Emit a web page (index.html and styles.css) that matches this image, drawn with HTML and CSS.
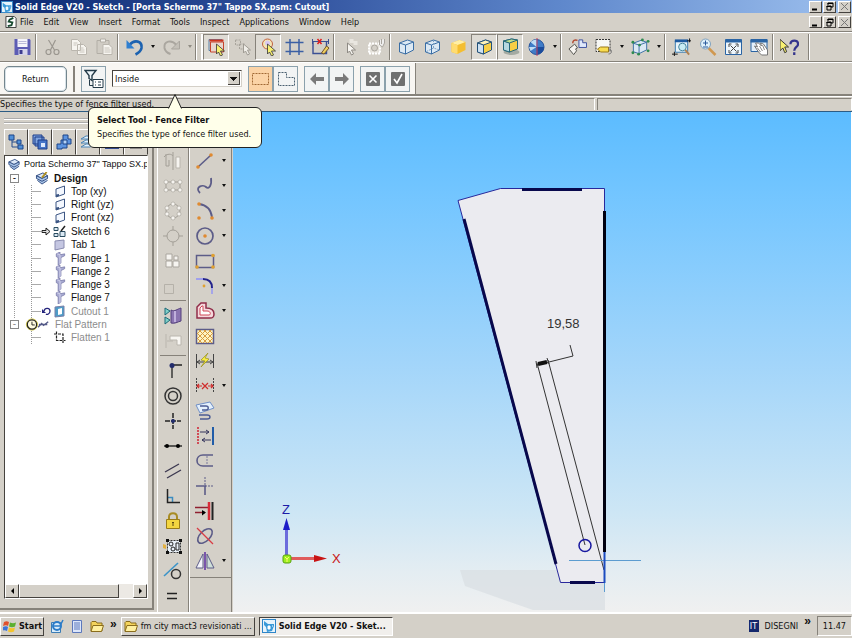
FILE: index.html
```html
<!DOCTYPE html>
<html lang="en">
  <head>
    <meta charset="UTF-8" />
    <meta name="viewport" content="width=device-width, initial-scale=1.0" />
    <link rel="stylesheet" href="styles.css">
    <title>Solid Edge V20</title>
  </head>
  <body>
    <!-- shared icons -->
    <svg class="defs" aria-hidden="true">
      <symbol id="logo" viewBox="0 0 14 14">
        <rect x="0.5" y="0.5" width="13" height="13" fill="#e8f4fc" stroke="#2f86c8" />
        <path d="M2 2l4 3h6v2l-2 5-5 1-1-5-2-2z" fill="#3a9ad9" />
        <path d="M6 7h2v3H6zM10 7h1" fill="#fff" stroke="#fff" />
      </symbol>
      <symbol id="plane" viewBox="0 0 12 12">
        <path d="M2 3.500L10.500 0.500V8.500L2 11.500z" fill="#f4f8ff" stroke="#3c5684" />
        <path d="M2 11.500L5 10.500V8.500L2 9z" fill="#3c5684" />
      </symbol>
      <symbol id="flange" viewBox="0 0 12 14">
        <path d="M2 2l4-2v3l5-1v2L7 6V12l-3 2V6L2 5z" fill="#a9abd2" stroke="#7476a6" stroke-width="0.8" />
        <path d="M3 2l3 1v10" fill="none" stroke="#d4d4ee" />
      </symbol>
      <symbol id="body" viewBox="0 0 14 14">
        <path d="M1 4l7-3 5 3-6 3z" fill="#dce8f8" stroke="#2c4a80" />
        <path d="M1 4v3l6 3 6-3V4L7 7zM2 9l5 4 6-4" fill="#a9c4e8" stroke="#2c4a80" />
      </symbol>
      <symbol id="cube" viewBox="0 0 18 18">
        <path d="M2 5l8-3 6 2v8l-8 4-6-2z" fill="#dce9f4" stroke="#3a6ea5" />
        <path d="M2 5l6 2 8-3M8 7v9" fill="none" stroke="#3a6ea5" />
      </symbol>
      <symbol id="cube-gold" viewBox="0 0 18 18">
        <path d="M2 5l8-3 6 2v8l-8 4-6-2z" fill="#f8cf45" stroke="#24527a" />
        <path d="M2 5l8-3 6 2-8 3z" fill="#fff3b8" stroke="#24527a" />
        <path d="M2 5l6 2v9l-6-2z" fill="#cfe2f2" stroke="#24527a" />
      </symbol>
      <symbol id="folder" viewBox="0 0 14 14">
        <path d="M1 3.500l1-1h4l1 1.500h5v8H1z" fill="#f3d35c" stroke="#8a6d1c" />
        <path d="M3 6.500h10.500l-2 6H1z" fill="#fff0a0" stroke="#8a6d1c" />
      </symbol>
      <symbol id="minimize" viewBox="0 0 9 9"><path d="M1 7.500h5" stroke="#000" stroke-width="2" /></symbol>
      <symbol id="restore" viewBox="0 0 9 9">
        <path d="M3 3V1h5v4H6M2 4h4v4H2z" fill="none" stroke="#000" />
        <path d="M2.500 1.500H8M1.500 4.500H6.500" stroke="#000" />
      </symbol>
      <symbol id="close" viewBox="0 0 9 9"><path d="M1 1l7 7M8 1L1 8" stroke="#777" /></symbol>
    </svg>

    <header class="titlebar">
      <svg class="app-icon"><use href="#logo" /></svg>
      <h1>Solid Edge V20 - Sketch - [Porta Schermo 37" Tappo SX.psm: Cutout]</h1>
      <div class="win-controls">
        <button aria-label="Minimize"><svg><use href="#minimize" /></svg></button>
        <button aria-label="Restore"><svg><use href="#restore" /></svg></button>
        <button class="close" aria-label="Close"><svg><use href="#close" /></svg></button>
      </div>
    </header>

    <nav class="menubar">
      <svg class="doc-icon" viewBox="0 0 13 13">
        <path d="M1 0.500h9l2 2v10H1z" fill="#fff" stroke="#333" />
        <path d="M9 2L5 4l-1 2 4 1-1 3-4 1" fill="none" stroke="#184a30" stroke-width="2" />
      </svg>
      <button>File</button>
      <button>Edit</button>
      <button>View</button>
      <button>Insert</button>
      <button>Format</button>
      <button>Tools</button>
      <button>Inspect</button>
      <button>Applications</button>
      <button>Window</button>
      <button>Help</button>
      <div class="win-controls">
        <button aria-label="Minimize document"><svg><use href="#minimize" /></svg></button>
        <button aria-label="Restore document"><svg><use href="#restore" /></svg></button>
        <button class="close" aria-label="Close document"><svg><use href="#close" /></svg></button>
      </div>
    </nav>

    <div class="toolbar">
      <button class="tool" aria-label="Save"><svg viewBox="0 0 18 18"><path d="M1 1h15l1 1v15H1z" fill="#5c5cb4" /><path d="M4 1h10v8H4z" fill="#f4f4fa" /><path d="M5 3.500h8M5 5.500h8" stroke="#b9b9d8" /><path d="M5 11h9v6H5z" fill="#d5d5ea" /><path d="M6 12h3v4H6z" fill="#3c3c90" /></svg></button>
      <span class="sep"></span>
      <button class="tool" aria-label="Cut"><svg viewBox="0 0 18 18"><g fill="none" stroke="#9b9790" stroke-width="1.200"><path d="M5 2l6 10M12 2L7 12" /><circle cx="5" cy="14" r="2.500" /><circle cx="13" cy="14" r="2.500" /></g></svg></button>
      <button class="tool" aria-label="Copy"><svg viewBox="0 0 18 18"><path d="M2 1.500h6l3 3v8H2zM8 6.500h6l3 3v7H8z" fill="#f7f5f0" stroke="#bab6ae" /><path d="M4 5h4M4 7h3M10 10h4M10 12h5M10 14h5" stroke="#c8c4bc" /></svg></button>
      <button class="tool" aria-label="Paste"><svg viewBox="0 0 18 18"><path d="M1.500 2.500h12v13h-12z" fill="#d0ccc4" stroke="#b2aea6" /><path d="M5 1h5v3H5z" fill="#f4f2ee" stroke="#b2aea6" /><path d="M7.500 6.500h6l3 3v7h-9z" fill="#f7f5f0" stroke="#bab6ae" /><path d="M9 10h5M9 12h6M9 14h6" stroke="#c8c4bc" /></svg></button>
      <span class="sep"></span>
      <button class="tool" aria-label="Undo"><svg viewBox="0 0 18 18"><path d="M4 7c5-6 13-4 12 3-.5 3-3 5-6 6.500" fill="none" stroke="#1c62b0" stroke-width="2.600" /><path d="M1 2v8.500h8z" fill="#2f7fd0" /></svg></button>
      <button class="caret" aria-label="Undo list"></button>
      <button class="tool" aria-label="Redo"><svg viewBox="0 0 18 18"><path d="M14 7C9 1 1 3 2 10c.5 3 3 5 6 6" fill="none" stroke="#aaa69f" stroke-width="2" /><path d="M17 3v8H9z" fill="#c4c0b8" stroke="#aaa69f" /></svg></button>
      <button class="caret dim" aria-label="Redo list"></button>
      <span class="sep wide"></span>
      <button class="tool on" aria-label="Select tool"><svg viewBox="0 0 18 18"><path d="M1.500 1.500h13v11h-13z" fill="none" stroke="#5a80a8" /><path d="M3 4h13v10H3z" fill="#e8d6ce" stroke="#c8442c" /><path d="M2 2.500h14" stroke="#d0341c" stroke-width="2" /><path d="M9 6v10l2-2 2 4 2-1-2-4h4z" fill="#f8f070" stroke="#333" stroke-width=".8" /></svg></button>
      <button class="tool" aria-label="Quick pick"><svg viewBox="0 0 18 18"><path d="M2 2h5v5H2zM6 6h5v5H6z" fill="none" stroke="#a8a49c" stroke-dasharray="2 1" /><path d="M10 6v9l2-2 2 4 2-1-2-4h3z" fill="#f0eee8" stroke="#a09c94" /></svg></button>
      <button class="tool on" aria-label="Sketch pick"><svg viewBox="0 0 18 18"><circle cx="8" cy="6" r="5" fill="#f3e6b4" stroke="#c06040" /><circle cx="8" cy="5" r="2.500" fill="#d8c8f0" /><path d="M8 6v10l2-2 2 4 2-1-2-4h4z" fill="#f8f070" stroke="#333" stroke-width=".8" /></svg></button>
      <button class="tool" aria-label="Grid"><svg viewBox="0 0 18 18"><path d="M0 4.500h18M0 13.500h18M4.500 1v16M13.500 1v16" stroke="#3b5fa4" stroke-width="1.500" /></svg></button>
      <button class="tool" aria-label="Relationship assistant"><svg viewBox="0 0 18 18"><path d="M1.500 3v12.500H15V3" fill="none" stroke="#3b4f94" stroke-width="1.400" /><path d="M1 3.500h16M1 1v5M17 1v5" stroke="#3b4f94" /><path d="M6 1l4 5M10 1L6 6" stroke="#e02020" stroke-width="1.500" /><path d="M10 15l5-7 2.500 2-5 6z" fill="#f0d060" stroke="#74562a" /></svg></button>
      <span class="sep"></span>
      <button class="tool" aria-label="Select from list"><svg viewBox="0 0 18 18"><path d="M8 1h4v4H8zM12 3h4v4h-4z" fill="#e9e6e0" /><path d="M6 5v10l2-2 2 4 2-1-2-4h4z" fill="#f8f6f2" stroke="#8e8a84" /></svg></button>
      <button class="tool" aria-label="Occurrence"><svg viewBox="0 0 18 18"><path d="M1.500 5.500h11v10h-11z" fill="#e6e3dc" stroke="#fff" stroke-width="2" stroke-dasharray="2 1" /><circle cx="7" cy="10" r="3" fill="#d4d0c8" stroke="#aaa69f" /><path d="M12 2v5l3 2 2-4V1M14 1v5" fill="#eee" stroke="#aaa69f" /></svg></button>
      <span class="sep"></span>
      <button class="tool" aria-label="Wireframe"><svg><use href="#cube" /></svg></button>
      <button class="tool" aria-label="Hidden edges"><svg viewBox="0 0 18 18"><use href="#cube" /><path d="M10 2v8l6 2M10 10l-8 4" fill="none" stroke="#7fa3c6" stroke-dasharray="2 1" /></svg></button>
      <button class="tool" aria-label="Shaded"><svg viewBox="0 0 18 18"><path d="M2 5l8-3 6 2v8l-8 4-6-2z" fill="#f4be30" /><path d="M2 5l8-3 6 2-8 3z" fill="#ffefa6" /><path d="M2 5l6 2v9l-6-2z" fill="#ffdc70" /></svg></button>
      <button class="tool on" aria-label="Shaded with edges"><svg><use href="#cube-gold" /></svg></button>
      <button class="tool on" aria-label="Drop shadow"><svg viewBox="0 0 18 18"><ellipse cx="10" cy="14" rx="8" ry="3" fill="#a4aaa2" /><path d="M2 3l8-2 6 1v9l-8 3-6-2z" fill="#f8cf45" stroke="#24667a" /><path d="M2 3l6 2v9l-6-2z" fill="#b6d8e0" stroke="#24667a" /><path d="M2 3l8-2 6 1-8 3z" fill="#bfe08c" stroke="#24667a" /></svg></button>
      <button class="tool" aria-label="Sharpen"><svg viewBox="0 0 18 18"><circle cx="9" cy="9" r="7.500" fill="#3f7cc8" stroke="#24529a" /><path d="M9 9L3 4a8 8 0 0 1 6-2.500zM9 9H1.500l1.500 4z" fill="#c0dcf4" /><path d="M9 9h7.500a7.500 7.500 0 0 1-7.500 7.500z" fill="#1c4c9c" /><path d="M9.500 0v18" stroke="#c04060" /></svg></button>
      <button class="caret" aria-label="Sharpen list"></button>
      <span class="sep"></span>
      <button class="tool" aria-label="Named views"><svg viewBox="0 0 20 18"><path d="M1 11l6-5 3 4-2 1 1 2-3 4z" fill="#f6f4f0" stroke="#50504c" /><path d="M11.500 1.500h4v3h4v5h-8z" fill="#dfe8fa" stroke="#3c50a0" /><path d="M5 5c0-3 2-4 5-3" fill="none" stroke="#b04830" stroke-width="1.500" /></svg></button>
      <button class="tool" aria-label="Tag"><svg viewBox="0 0 18 18"><path d="M1.500 1.500h14v12h-14z" fill="#f7f7f4" stroke="#333" stroke-dasharray="2 1" /><path d="M3 11l3-2h8v5H6z" fill="#f8dc50" stroke="#9a7818" /><path d="M14 11c4 0 4 5 0 5" fill="none" stroke="#777" /></svg></button>
      <button class="caret" aria-label="Tag list"></button>
      <button class="tool" aria-label="Common views"><svg viewBox="0 0 20 18"><use href="#cube" width="19" height="18" /><g fill="#2d8a50"><circle cx="2" cy="4" r="1.500" /><circle cx="2" cy="15" r="1.500" /><circle cx="8" cy="16.500" r="1.500" /><circle cx="9" cy="7" r="1.500" /><circle cx="12" cy="1.500" r="1.500" /><circle cx="18" cy="3" r="1.500" /><circle cx="18" cy="13" r="1.500" /></g></svg></button>
      <button class="caret" aria-label="Common views list"></button>
      <span class="sep"></span>
      <button class="tool" aria-label="Zoom area"><svg viewBox="0 0 20 18"><path d="M3.500 2.500h13v12h-13z" fill="#e8f4fa" stroke="#3578b0" /><path d="M3 2.500h14" stroke="#1d5aa0" stroke-width="3" /><circle cx="11" cy="9" r="4" fill="#c8ecf4" stroke="#3f7f98" /><path d="M14 12l4 5" stroke="#b08050" stroke-width="2" /><path d="M0 16.500h6M2.500 14v5M16 2.500h4M18.500 0v4" stroke="#111" /></svg></button>
      <button class="tool" aria-label="Zoom"><svg viewBox="0 0 18 18"><path d="M10 10l7 7" stroke="#d09850" stroke-width="2.500" /><circle cx="7" cy="6" r="5" fill="#dff1fb" stroke="#7fa2c0" /><path d="M4.500 5h5M7 2.500v5M4.500 9h5" stroke="#2a5a9c" /></svg></button>
      <button class="tool" aria-label="Fit"><svg viewBox="0 0 18 18"><path d="M1 1.500h16v15H1z" fill="#eef6fc" stroke="#2a64a4" /><path d="M1 3h16" stroke="#2a64a4" stroke-width="3" /><path d="M6 7.500l6 6M12 7.500l-6 6" stroke="#444" /><path d="M4.500 9V6H7M11 6h2.500v3M4.500 12v3H7M11 15h2.500v-3" fill="none" stroke="#444" /></svg></button>
      <button class="tool" aria-label="Pan"><svg viewBox="0 0 18 18"><path d="M.5 1.500h16v12H.5z" fill="#e4f0fa" stroke="#2a64a4" /><path d="M0 3h17" stroke="#2a64a4" stroke-width="3" /><path d="M4 8l3 1-2-4 3 0 3 3-1-3 3 1 4 6v5h-6l-3-3z" fill="#fff" stroke="#777" /><path d="M7 10l3 4M9 8l3 5M12 7l2 5" stroke="#888" /></svg></button>
      <span class="sep"></span>
      <button class="tool" aria-label="Help"><svg viewBox="0 0 20 18"><path d="M0 1v12l3-3 2 5 2-1-2-5h4z" fill="#f8f070" stroke="#333" /><path d="M11 6c0-5 8-5 8 0 0 3-4 3-4 7M15 14.500v3" fill="none" stroke="#34348c" stroke-width="2.400" /></svg></button>
      <span class="sep end"></span>
    </div>

    <div class="ribbon">
      <div class="ribbon-bar">
        <button class="return">Return</button>
        <span class="rule"></span>
        <button class="rb" aria-label="Filter"><svg viewBox="0 0 20 20"><path d="M1 1.500h11L8 6.500v5l-3-2v-3z" fill="#eef6fa" stroke="#233a48" stroke-width="1.400" /><path d="M5.500 11v5.500H9" fill="none" stroke="#233a48" /><path d="M9 10.500h10v8H9z" fill="#fff" stroke="#233a48" /><path d="M11 13h1M14 13h3M11 16h1M14 16h3" stroke="#233a48" /></svg></button>
        <select class="fence" id="fence" aria-label="Fence filter">
          <option>Inside</option>
        </select>
        <div class="rb-pair">
          <button class="rb hot" aria-label="Rectangle fence"><svg viewBox="0 0 20 20"><path d="M1.500 4.500h16v11h-16z" fill="none" stroke="#a06834" stroke-dasharray="2 1" /></svg></button>
          <button class="rb" aria-label="Polygon fence"><svg viewBox="0 0 20 20"><path d="M2.500 3.500h8v5h8v8h-16z" fill="none" stroke="#4a6070" stroke-dasharray="2 1" /></svg></button>
        </div>
        <div class="rb-pair">
          <button class="rb" aria-label="Previous"><svg viewBox="0 0 20 20"><path d="M3 10l6-6v4h8v4H9v4z" fill="#7a7a7a" /></svg></button>
          <button class="rb" aria-label="Next"><svg viewBox="0 0 20 20"><path d="M17 10l-6-6v4H3v4h8v4z" fill="#7a7a7a" /></svg></button>
        </div>
        <div class="rb-pair">
          <button class="rb" aria-label="Cancel"><svg viewBox="0 0 20 20"><rect x="3" y="3" width="14" height="14" rx="1" fill="#6f7070" /><path d="M6.500 6.500l7 7M13.500 6.500l-7 7" stroke="#fff" stroke-width="1.600" /></svg></button>
          <button class="rb" aria-label="Accept"><svg viewBox="0 0 20 20"><rect x="3" y="3" width="14" height="14" rx="1" fill="#6f7070" /><path d="M6 10l3 4 5-9" fill="none" stroke="#fff" stroke-width="1.600" /></svg></button>
        </div>
      </div>
      <div class="tooltip" role="tooltip">
        <svg class="tip" viewBox="0 0 14 15"><path d="M0.500 14.500L7 0.500L13.500 14.500" fill="#ffffea" stroke="#222" /></svg>
        <strong>Select Tool - Fence Filter</strong>
        <p>Specifies the type of fence filter used.</p>
      </div>
    </div>

    <div class="prompt">
      <p>Specifies the type of fence filter used.</p>
      <p></p>
    </div>

    <main class="work">
      <aside class="edgebar">
        <div class="grip"></div>
        <div class="tabs">
          <button class="active" aria-label="Feature PathFinder"><svg viewBox="0 0 16 16"><path d="M4 5v8h6M4 8h6" fill="none" stroke="#244c8c" /><path d="M1 1h5v5H1zM9 6h4v4H9zM10 11h5v4h-5z" fill="#5090d8" stroke="#1c4488" /></svg></button>
          <button aria-label="Feature library"><svg viewBox="0 0 16 16"><path d="M1 1h9v9H1zM3 3h9v9H3z" fill="#7fa4e0" stroke="#1c3c88" /><path d="M6 6h9v9H6z" fill="#4474c8" stroke="#1c3c88" /><path d="M9 9h4v4H9z" fill="#dce8fc" /></svg></button>
          <button aria-label="Family of parts"><svg viewBox="0 0 16 16"><path d="M7 1h5v4h3v5h-4v4H6v1H1v-5h4V6h2z" fill="#5c94e0" stroke="#1c4488" /><path d="M7 6h4v4H7z" fill="#b4d4f8" stroke="#1c4488" /></svg></button>
          <button aria-label="Layers"><svg viewBox="0 0 16 16"><path d="M1 5l5-3h9l-5 3zM1 9l5-3h9l-5 3zM1 13l5-3h9l-5 3z" fill="#e4f2fc" stroke="#4c84b4" /></svg></button>
          <button aria-label="Sensors"><svg viewBox="0 0 16 16"><path d="M1 1h14v14H1z" fill="#344c90" /></svg></button>
          <button aria-label="Playback"><svg viewBox="0 0 16 16"><path d="M2 2h12v12H2z" fill="#ddd" stroke="#444" /></svg></button>
        </div>
        <div class="tree-box">
          <ul class="tree">
            <li class="root group"><svg><use href="#body" /></svg>Porta Schermo 37" Tappo SX.p</li>
            <li class="branch">
              <span class="box">-</span>
              <svg viewBox="0 0 14 14"><use href="#body" /><path d="M7 6l5-6" stroke="#b09020" stroke-width="2" /></svg>
              <b>Design</b>
            </li>
            <li>
              <ul class="leaves">
                <li><svg><use href="#plane" /></svg>Top (xy)</li>
                <li><svg><use href="#plane" /></svg>Right (yz)</li>
                <li class="group"><svg><use href="#plane" /></svg>Front (xz)</li>
                <li class="current">
                  <svg class="wide" viewBox="0 0 26 13"><path d="M1 5.500h4V3l4 3.500L5 10V7.500H1z" fill="#ddd" stroke="#222" /><path d="M13 2.500h4v3h-4zM13 8.500h4v3h-4zM19 6.500h5v5h-5z" fill="#dbe9f4" stroke="#2a4c60" /><path d="M20 6l4-5" stroke="#222" stroke-width="1.500" /></svg>Sketch 6
                </li>
                <li class="group"><svg viewBox="0 0 12 12"><path d="M1 2.500l9-1v8l-9 2z" fill="#c5c7e2" stroke="#8a8cb0" /></svg>Tab 1</li>
                <li><svg><use href="#flange" /></svg>Flange 1</li>
                <li><svg><use href="#flange" /></svg>Flange 2</li>
                <li><svg><use href="#flange" /></svg>Flange 3</li>
                <li class="group"><svg><use href="#flange" /></svg>Flange 7</li>
                <li class="current dim last">
                  <svg class="wide" viewBox="0 0 26 13"><path d="M3 6c1-4 6-3 6 0s-3 4-4 3" fill="none" stroke="#24247c" stroke-width="1.300" /><path d="M1 4v4h4z" fill="#24247c" /><path d="M14 2l9-1v10l-9 1z" fill="#4e9cc8" stroke="#7880a8" /><path d="M17 4l4-1v6l-4 1z" fill="#fff" /></svg>Cutout 1
                </li>
              </ul>
            </li>
            <li class="branch flat dim">
              <span class="box">-</span>
              <svg viewBox="0 0 26 14"><circle cx="6.500" cy="7" r="6" fill="#fffce0" stroke="#c8bc30" /><circle cx="6.500" cy="7" r="5" fill="none" stroke="#222" stroke-width="1.300" /><path d="M6.500 4V7.500h3" fill="none" stroke="#222" /><path d="M13 10l4-4 2 2 5-4M14 7h9" fill="none" stroke="#555a88" stroke-width="1.500" /></svg>
              Flat Pattern
            </li>
            <li>
              <ul class="leaves">
                <li class="dim last"><svg viewBox="0 0 12 12"><path d="M0 2.500h9v9M2.500 0v9h9" fill="none" stroke="#222" stroke-width="1.200" stroke-dasharray="3 1" /></svg>Flatten 1</li>
              </ul>
            </li>
          </ul>
          <div class="hscroll">
            <button aria-label="Scroll left"><svg viewBox="0 0 5 8"><path d="M4 1v6L1 4z" /></svg></button>
            <div class="track"><div class="thumb"></div></div>
            <button aria-label="Scroll right"><svg viewBox="0 0 5 8"><path d="M1 1v6l3-3z" /></svg></button>
          </div>
        </div>
      </aside>

      <div class="palette">
        <button class="pt" aria-label="Mirror"><svg viewBox="0 0 20 20"><path d="M10 1v18M1 6c3-4 8-3 9-1M3 3v12h3V9" fill="none" stroke="#a39f97" /><path d="M13 6h4v11h-4z" fill="#f6f4f0" stroke="#bab6ae" /></svg></button>
        <button class="pt" aria-label="Rectangular pattern"><svg viewBox="0 0 20 20"><path d="M3 6h14v8H3z" fill="none" stroke="#a39f97" /><g fill="#f6f4f0" stroke="#a39f97" stroke-width=".6"><circle cx="3" cy="6" r="2" /><circle cx="10" cy="6" r="2" /><circle cx="17" cy="6" r="2" /><circle cx="3" cy="14" r="2" /><circle cx="10" cy="14" r="2" /><circle cx="17" cy="14" r="2" /></g></svg></button>
        <button class="pt" aria-label="Circular pattern"><svg viewBox="0 0 20 20"><circle cx="10" cy="10" r="7" fill="none" stroke="#a39f97" /><g fill="#f6f4f0" stroke="#a39f97" stroke-width=".6"><circle cx="10" cy="3" r="2" /><circle cx="16" cy="7" r="2" /><circle cx="16" cy="13" r="2" /><circle cx="10" cy="17" r="2" /><circle cx="4" cy="13" r="2" /><circle cx="4" cy="7" r="2" /></g></svg></button>
        <button class="pt" aria-label="Point"><svg viewBox="0 0 20 20"><circle cx="10" cy="10" r="6" fill="none" stroke="#a39f97" /><path d="M10 0v4M10 16v4M0 10h4M16 10h4" stroke="#a39f97" /></svg></button>
        <button class="pt" aria-label="Tiles"><svg viewBox="0 0 20 20"><path d="M3 3h6v6H3zM3 10h6v6H3zM10 10h6v6h-6zM11 5h4v4h-4z" fill="#f6f4f0" stroke="#aaa69f" /></svg></button>
        <button class="pt" aria-label="Scale"><svg viewBox="0 0 20 20"><path d="M1.500 8.500h9v9h-9z" fill="none" stroke="#b5b1a9" /></svg></button>
        <span class="hsep"></span>
        <button class="pt" aria-label="Project"><svg viewBox="0 0 20 20"><path d="M2 2l5 3-5 4zM2 11l5 3-5 4z" fill="#7fd0c8" stroke="#1e6a78" /><path d="M8 4c4 2 6-1 10-2v13c-4 1-6 3-10 2z" fill="#8a74b0" stroke="#54407c" /><path d="M12 5v11" stroke="#c0b0dc" stroke-width="2" /></svg></button>
        <button class="pt" aria-label="Include"><svg viewBox="0 0 20 20"><path d="M3 3v14M4 10h6" stroke="#bab6ae" /><path d="M7 5h11v9h-4V9H7z" fill="#f8f6f2" stroke="#bab6ae" /></svg></button>
        <span class="hsep"></span>
        <button class="pt" aria-label="Connect"><svg viewBox="0 0 20 20"><path d="M9 17V4h10" fill="none" stroke="#222" stroke-width="1.300" /><circle cx="9" cy="4.500" r="2.500" fill="#222c6c" /></svg></button>
        <button class="pt" aria-label="Concentric"><svg viewBox="0 0 20 20"><circle cx="10" cy="10" r="8" fill="none" stroke="#333" stroke-width="1.500" /><circle cx="10" cy="10" r="4.500" fill="none" stroke="#333" stroke-width="1.500" /></svg></button>
        <button class="pt" aria-label="Horizontal/vertical"><svg viewBox="0 0 20 20"><path d="M10 2v16M2 10h16" stroke="#222" stroke-width="1.500" stroke-dasharray="5 1" /><circle cx="10" cy="10" r="2" fill="#222c6c" /></svg></button>
        <button class="pt" aria-label="Collinear"><svg viewBox="0 0 20 20"><path d="M1 10h18" stroke="#222" stroke-width="1.400" /><circle cx="4" cy="10" r="2" /><circle cx="15" cy="10" r="2" /></svg></button>
        <button class="pt" aria-label="Parallel"><svg viewBox="0 0 20 20"><path d="M2 11l14-8M4 17l14-8" stroke="#3c3850" stroke-width="1.400" /></svg></button>
        <button class="pt" aria-label="Perpendicular"><svg viewBox="0 0 20 20"><path d="M4.500 11.500h5v5" fill="none" stroke="#3c8cc0" stroke-width="1.500" /><path d="M4.500 3v13.500H17" fill="none" stroke="#222" stroke-width="1.500" /></svg></button>
        <button class="pt" aria-label="Lock"><svg viewBox="0 0 20 20"><path d="M6 9V6c0-5 8-5 8 0v3" fill="none" stroke="#a88c24" stroke-width="2" /><path d="M3.500 8.500h13v9h-13z" fill="#f4d640" stroke="#9a7c18" /><path d="M10 11v4M9 11.500h2" stroke="#5c4a10" /></svg></button>
        <button class="pt" aria-label="Rigid set"><svg viewBox="0 0 20 20"><path d="M4.500 4.500h13v12h-13z" fill="#e8f0f8" stroke="#333" stroke-dasharray="2 1" /><path d="M3 3h3v3H3zM16 3h3v3h-3zM3 15h3v3H3zM16 15h3v3h-3z" fill="#111" /><circle cx="8" cy="8" r="2" fill="none" stroke="#222" /><circle cx="10" cy="13" r="2" fill="none" stroke="#222" /><path d="M13 7h3v7h-3z" fill="none" stroke="#222" /><path d="M0 8l3 1v4l-3-1z" fill="#e2b040" /></svg></button>
        <button class="pt" aria-label="Tangent"><svg viewBox="0 0 20 20"><path d="M1 15L15 2" stroke="#3c94c8" stroke-width="1.600" /><circle cx="13" cy="13" r="4.500" fill="none" stroke="#333" stroke-width="1.500" /></svg></button>
        <button class="pt" aria-label="Equal"><svg viewBox="0 0 20 20"><path d="M4 7.500h10M4 12.500h10" stroke="#222" stroke-width="1.600" /></svg></button>
      </div>

      <div class="palette draw">
        <div class="draw-list">
          <button class="pt more" aria-label="Line"><svg viewBox="0 0 20 20"><path d="M3 16L16 4" stroke="#5c5c88" stroke-width="1.600" /><circle cx="3" cy="16" r="1.800" fill="#e08a30" /><circle cx="16" cy="4" r="1.800" fill="#e08a30" /></svg></button>
          <button class="pt more" aria-label="Curve"><svg viewBox="0 0 20 20"><path d="M5 17c-6-6 3-9 6-6s6-2 5-9" fill="none" stroke="#5c5c88" stroke-width="1.800" /></svg></button>
          <button class="pt more" aria-label="Arc"><svg viewBox="0 0 20 20"><path d="M4 3c8 1 12 6 13 13" fill="none" stroke="#5c5c88" stroke-width="1.800" /><circle cx="4" cy="3" r="1.800" fill="#e08a30" /><circle cx="17" cy="17" r="1.800" fill="#e08a30" /><circle cx="4" cy="17" r="1.800" fill="#e08a30" /></svg></button>
          <button class="pt more" aria-label="Circle"><svg viewBox="0 0 20 20"><circle cx="10" cy="10" r="8" fill="none" stroke="#5c5c88" stroke-width="1.700" /><circle cx="10" cy="10" r="1.800" fill="#e08a30" /></svg></button>
          <button class="pt" aria-label="Rectangle"><svg viewBox="0 0 20 20"><path d="M1.500 4.500h17v12h-17z" fill="none" stroke="#5c5c88" stroke-width="1.500" /><circle cx="18" cy="4.500" r="1.800" fill="#e0a030" /><circle cx="18" cy="16" r="1.800" fill="#e0a030" /><circle cx="2" cy="16" r="1.800" fill="#e0a030" /></svg></button>
          <button class="pt more" aria-label="Fillet"><svg viewBox="0 0 20 20"><path d="M1 3h7M17 12v6" stroke="#a0a0ec" stroke-width="1.800" /><path d="M8 3c6 0 9 3 9 9" fill="none" stroke="#24248c" stroke-width="2" /><circle cx="9" cy="10" r="1.400" fill="#e0a030" /></svg></button>
          <button class="pt more" aria-label="Offset"><svg viewBox="0 0 20 20"><path d="M2 17V6l4-4h5v5c5 0 8 2 8 6s-2 4-4 4z" fill="#f4d8dc" stroke="#902c48" stroke-width="1.500" /><path d="M5 14V7l2-2h1v5h4c4 0 4 4 2 4z" fill="#fff" stroke="#d04858" /></svg></button>
          <button class="pt" aria-label="Fill"><svg viewBox="0 0 20 20"><path d="M1.500 3.500h17v14h-17z" fill="#fdf4c4" stroke="#5c5c88" stroke-width="1.500" /><path d="M2 8l4-4M2 13l9-9M3 17L16 4M8 17L18 7M13 17l5-5M2 12l5 5M2 7l10 10M4 4l13 13M9 4l9 9M14 4l4 4" stroke="#d89c40" /></svg></button>
          <button class="pt" aria-label="Smart dimension"><svg viewBox="0 0 20 20"><path d="M1.500 3v14M18.500 3v14M1 11h18M5 9l-3 2 3 2M15 9l3 2-3 2" fill="none" stroke="#444" /><path d="M13 2L6 9l4 1-4 6 8-8-4-1z" fill="#f8ec40" stroke="#98901c" stroke-width=".7" /></svg></button>
          <button class="pt more" aria-label="Distance between"><svg viewBox="0 0 20 20"><path d="M1.500 2v15M18.500 2v15" stroke="#444" stroke-dasharray="2 1" /><path d="M2 10h5M13 10h5M4 8l-2 2 2 2M16 8l2 2-2 2M7 7l6 6M13 7l-6 6" fill="none" stroke="#d02c2c" stroke-width="1.200" /></svg></button>
          <button class="pt" aria-label="Copy sketch"><svg viewBox="0 0 20 20"><path d="M1 4l14-3 4 6-14 5z" fill="#e4f0fc" stroke="#7090c8" /><path d="M5 5h6c3 0 3 4 0 4H7M4 14h8c4 0 4 4 0 4H5" fill="none" stroke="#4c5c94" stroke-width="1.400" /></svg></button>
          <button class="pt" aria-label="Move to"><svg viewBox="0 0 20 20"><path d="M3 1v18" stroke="#d02c3c" stroke-width="1.600" stroke-dasharray="2 1" /><path d="M18 1v18" stroke="#205ca8" stroke-width="2" /><path d="M5 6h9M11 4l3 2-3 2M16 14H7M10 12l-3 2 3 2" fill="none" stroke="#34345c" /></svg></button>
          <button class="pt" aria-label="Trim"><svg viewBox="0 0 20 20"><path d="M18 4H8c-8 0-8 11 0 11h10" fill="none" stroke="#5c5c88" stroke-width="1.600" /><path d="M12 5v10" stroke="#7a7a9c" stroke-dasharray="2 1" /></svg></button>
          <button class="pt" aria-label="Extend"><svg viewBox="0 0 20 20"><path d="M1 10h10M10 10v9" stroke="#5c5c88" stroke-width="1.600" /><path d="M10 1v9h9" fill="none" stroke="#5c5c88" stroke-dasharray="2 1" /></svg></button>
          <button class="pt" aria-label="Snap to edge"><svg viewBox="0 0 20 20"><path d="M0 6.500h13M0 11.500h10" stroke="#902030" stroke-width="1.500" /><path d="M7 9l4 2.500-4 3z" /><path d="M14 1v18" stroke="#d82c38" stroke-width="2.500" /><path d="M17.500 1v18" stroke="#222" stroke-width="2" /></svg></button>
          <button class="pt" aria-label="Symmetric"><svg viewBox="0 0 20 20"><ellipse cx="10" cy="10" rx="9" ry="5" transform="rotate(-45 10 10)" fill="none" stroke="#5c5c88" stroke-width="1.600" /><path d="M2 2l16 16" stroke="#d83c44" stroke-width="1.300" /></svg></button>
          <button class="pt more" aria-label="Mirror lines"><svg viewBox="0 0 20 20"><path d="M8 3v14H1z" fill="#f4f4fa" stroke="#5c5c88" /><path d="M12 3v14h7z" fill="#cfe0d8" stroke="#5c5c88" /><path d="M10 1v18" stroke="#7048a8" stroke-width="1.800" /></svg></button>
        </div>
      </div>

      <section class="view" aria-label="Model view">
        <svg class="model">
          <path d="M227 458h145v40h-72l-68-24z" fill="#dadfe3" opacity=".75" />
          <path d="M225 88.500L267.500 76.500H371.500V470.500H327.500z" fill="#ebebf0" stroke="#28289c" />
          <path d="M231 107L323 452" stroke="#08084c" stroke-width="3" />
          <path d="M289 77.500h60M337 470.500h25" stroke="#08084c" stroke-width="3" />
          <path d="M371.500 99V440" stroke="#000010" stroke-width="3" />
          <path d="M304 251L352 433M315 248L371 458M304 253l36-9-3-11M303 249l1 7M314 246l2 6" fill="none" stroke="#333" />
          <path d="M305 252l9-2" stroke="#111" stroke-width="4" />
          <circle cx="352" cy="433.500" r="6" fill="none" stroke="#1818a0" stroke-width="1.500" />
          <path d="M336 448.500h72M371.500 440v40" stroke="#5c9cd0" />
          <path d="M371.500 440v31" stroke="#1c4cc0" stroke-width="2" />
          <text class="dim-text" x="314" y="216">19,58</text>

          <path d="M53.500 445V415" stroke="#6c6cdc" stroke-width="3" />
          <path d="M50 418h7l-3.500-12z" fill="#1c1cc8" />
          <path d="M55 446.500h28" stroke="#e05c5c" stroke-width="3" />
          <path d="M81 443v7l13-3.500z" fill="#c81414" />
          <rect x="50" y="443" width="8" height="8" rx="2" fill="#9cf020" stroke="#58a010" />
          <path d="M52 445l2 2 2-2M54 447v3" fill="none" stroke="#fffb70" />
          <text class="axis z" x="49" y="402">Z</text>
          <text class="axis x" x="99" y="451">X</text>
        </svg>
      </section>
    </main>

    <footer class="taskbar">
      <button class="start"><svg viewBox="0 0 14 14"><path d="M1 3c2-1 3-1 5 0L5 7C4 6 2 6 0 7z" fill="#e0502c" /><path d="M7 3.500c2 1 4 1 6 0l-1 4c-2 1-4 1-6 0z" fill="#5cb030" /><path d="M0 8c2-1 4-1 5 0l-1 4c-2-1-3-1-5 0z" fill="#3c74d8" /><path d="M6 8.500c2 1 4 1 6 0l-1 4c-2 1-4 1-6 0z" fill="#f4c42c" /></svg>Start</button>
      <div class="quick">
        <button aria-label="Internet Explorer"><svg viewBox="0 0 14 14"><path d="M1.500 3.500h9v10h-9z" fill="#d9ecfa" stroke="#3c7cb4" /><circle cx="7" cy="7" r="4" fill="none" stroke="#2c7cc8" stroke-width="2" /><path d="M4 7h6l3-6" fill="none" stroke="#2c7cc8" stroke-width="1.500" /></svg></button>
        <button aria-label="Notepad"><svg viewBox="0 0 14 14"><path d="M2.500 1.500h9v12h-9z" fill="#dce6fa" stroke="#5c78bc" /><path d="M4 4h6M4 6h6M4 8h6M4 10h6" stroke="#5c78bc" /></svg></button>
        <button aria-label="Explorer"><svg><use href="#folder" /></svg></button>
        <span class="chevron">»</span>
      </div>
      <button class="task"><svg><use href="#folder" /></svg>fm city mact3 revisionati ...</button>
      <button class="task active"><svg><use href="#logo" /></svg>Solid Edge V20 - Sket...</button>
      <div class="tray">
        <span class="lang">IT</span>
        <span>DISEGNI</span>
        <span class="chevron">»</span>
        <time class="clock">11.47</time>
      </div>
    </footer>
  </body>
</html>
```
FILE: styles.css
```css
:root {
  --face: #d4d0c8;
  --light: #f8f6f2;
  --shade: #86827a;
  --dark: #45423e;
  --ui: "DejaVu Sans Condensed", "Noto Sans", sans-serif;
  --sans: "Liberation Sans", Arial, sans-serif;
}

* {
  box-sizing: border-box;
}

body {
  margin: 0;
  padding: 0 2px 2px 0;
  min-height: 100vh;
  display: flex;
  flex-direction: column;
  background: #fff;
  color: #111;
  font: 9px/12px var(--ui);
}

button,
select {
  margin: 0;
  padding: 0;
  border: 0;
  background: none;
  color: inherit;
  font: inherit;
}

p,
ul,
h1 {
  margin: 0;
  padding: 0;
  list-style: none;
}

svg {
  display: block;
  flex: none;
}

.defs {
  position: absolute;
  width: 0;
  height: 0;
}

/* title and menu */
.titlebar {
  display: flex;
  align-items: center;
  height: 13px;
  padding: 0 1px;
  background: linear-gradient(90deg, #0c2a72, #2f509c 33%, #5f88cc 66%, #9dc0ee);
  color: #fff;
}

.titlebar h1 {
  font: bold 9px/12px var(--ui);
  white-space: nowrap;
}

.app-icon {
  width: 12px;
  height: 12px;
  margin-right: 2px;
}

.win-controls {
  display: flex;
  gap: 1px;
  margin-left: auto;
}

.win-controls button {
  display: grid;
  place-items: center;
  width: 13px;
  height: 12px;
  background: var(--face);
  border: 1px solid;
  border-color: #fff var(--dark) var(--dark) #fff;
}

.win-controls .close {
  margin-left: 1px;
}

.win-controls svg {
  width: 9px;
  height: 9px;
}

.menubar {
  display: flex;
  align-items: center;
  gap: 10px;
  height: 18px;
  padding: 0 1px 0 5px;
  background: var(--face);
}

.doc-icon {
  width: 12px;
  height: 12px;
  margin-right: -7px;
}

/* main toolbar */
.toolbar {
  display: flex;
  align-items: center;
  height: 31px;
  padding-left: 9px;
  background: var(--face);
  border-top: 1px solid var(--shade);
  border-bottom: 1px solid var(--shade);
  box-shadow: inset 0 1px #fff;
}

.tool {
  display: grid;
  place-items: center;
  flex: none;
  width: 26px;
  height: 26px;
}

.tool.on {
  background: #dedbd4;
  border: 1px solid;
  border-color: var(--shade) #fff #fff var(--shade);
}

.tool svg {
  width: 19px;
  height: 18px;
}

.caret {
  width: 11px;
  height: 24px;
  display: grid;
  place-items: center;
}

.caret::before,
.pt.more::after {
  content: "";
  border: 2px solid transparent;
  border-top: 3px solid #111;
  border-bottom: 0;
}

.caret.dim::before {
  border-top-color: #908c84;
}

.sep {
  width: 4px;
  height: 26px;
  border-left: 1px solid var(--shade);
  box-shadow: inset 1px 0 #fff;
}

.sep.wide {
  width: 8px;
  border-right: 2px solid #fff;
}

.sep.end {
  margin-left: 6px;
}

/* ribbon */
.ribbon {
  position: relative;
  display: flex;
  background: var(--face);
  border-top: 1px solid #fff;
  border-bottom: 2px solid var(--shade);
}

.ribbon-bar {
  display: flex;
  align-items: center;
  gap: 6px;
  height: 31px;
  padding: 0 5px 0 4px;
  background: var(--light);
  border-right: 1px solid var(--shade);
}

.return {
  width: 63px;
  height: 26px;
  background: #fff;
  border: 1px solid #74868e;
  border-radius: 5px;
  box-shadow: inset 0 0 0 1px #d9e3e8;
}

.rule {
  width: 2px;
  height: 26px;
  background: var(--shade);
}

.rb {
  display: grid;
  place-items: center;
  width: 25px;
  height: 26px;
  background: #f2f4f4;
  border: 1px solid #8ba1ac;
}

.rb.hot {
  background: #fbd3a6;
}

.rb svg {
  width: 20px;
  height: 20px;
}

.rb-pair {
  display: flex;
}

.fence {
  width: 130px;
  height: 17px;
  padding-left: 2px;
  appearance: none;
  border: 1px solid;
  border-color: var(--dark) var(--face) var(--face) var(--dark);
  border-radius: 0;
  background:
    linear-gradient(#111, #111) right 4px top 6px / 7px 1px no-repeat,
    linear-gradient(#111, #111) right 5px top 7px / 5px 1px no-repeat,
    linear-gradient(#111, #111) right 6px top 8px / 3px 1px no-repeat,
    linear-gradient(#111, #111) right 7px top 9px / 1px 1px no-repeat,
    linear-gradient(var(--face), var(--face)) right 2px top 1px / 11px 12px no-repeat,
    linear-gradient(var(--dark), var(--dark)) right 1px top 1px / 12px 13px no-repeat,
    #fff;
}

.tooltip {
  position: absolute;
  z-index: 2;
  top: 44px;
  left: 88px;
  padding: 5px 10px 6px 8px;
  background: #ffffea;
  border: 1px solid #222;
  border-radius: 6px;
  line-height: 14px;
  white-space: nowrap;
}

.tooltip .tip {
  position: absolute;
  top: -14px;
  left: 79px;
  width: 14px;
  height: 15px;
}

.prompt {
  display: grid;
  grid-template-columns: 70fr 30fr;
  gap: 2px;
  height: 16px;
  padding: 1px 0;
  background: var(--face);
  border-top: 1px solid #fff;
  border-bottom: 1px solid #2c5c84;
}

.prompt p {
  border-top: 1px solid var(--shade);
  border-right: 1px solid #fff;
  line-height: 11px;
}

.prompt p + p {
  border-left: 1px solid var(--shade);
}

/* work area */
.work {
  flex: 1;
  display: flex;
  background: var(--face);
  border-bottom: 1px solid #fff;
}

.edgebar {
  display: flex;
  flex-direction: column;
  width: 154px;
  margin-bottom: 2px;
  padding: 0 4px 9px;
  border-right: 2px solid var(--shade);
  border-bottom: 2px solid var(--shade);
}

.grip {
  height: 6px;
  margin: 6px 0 5px;
  border-top: 2px groove #fff;
  border-bottom: 2px groove #fff;
}

.tabs {
  display: flex;
  height: 26px;
}

.tabs button {
  flex: 1;
  display: grid;
  place-items: center;
  border: 1px solid;
  border-color: #fff var(--dark) transparent #fff;
}

.tabs svg {
  width: 16px;
  height: 16px;
}

.tree-box {
  flex: 1;
  display: flex;
  flex-direction: column;
  background: #fff;
  border: 1px solid;
  border-color: var(--dark) #fff #fff var(--dark);
}

.tree {
  flex: 1;
  padding: 2px 0 0 3px;
  overflow: hidden;
  font: 10px/13px var(--sans);
  white-space: nowrap;
}

.tree svg {
  width: 12px;
  height: 13px;
}

.tree .group {
  margin-bottom: 1px;
}

.root,
.branch,
.leaves li {
  display: flex;
  align-items: center;
  height: 13px;
}

.root {
  gap: 4px;
  font-size: 9px;
}

.branch b {
  font-size: 10px;
}

.branch svg {
  width: 14px;
  margin: 0 5px 0 16px;
}

.branch .box {
  width: 9px;
  height: 9px;
  margin-left: 2px;
  background: #fff;
  border: 1px solid #888;
  line-height: 6px;
  text-align: center;
}

.branch.flat svg {
  width: 26px;
  margin: 0 4px 0 6px;
}

.leaves {
  margin-left: 6px;
  padding-left: 16px;
  border-left: 1px dotted #999;
}

.leaves li {
  gap: 5px;
  padding-left: 22px;
  background: linear-gradient(#aaa, #aaa) 0 6px / 9px 1px no-repeat;
  border-left: 1px dotted #999;
}

.tree li:last-child > .leaves {
  border-color: transparent;
}

.leaves .current {
  padding-left: 9px;
}

.leaves .wide {
  width: 26px;
  margin-right: -1px;
}

.dim {
  color: #8c8c8c;
}

.hscroll {
  display: flex;
  height: 14px;
  background: #ece9e4;
}

.hscroll button {
  display: grid;
  place-items: center;
  width: 14px;
  background: var(--face);
  border: 1px solid;
  border-color: #fff var(--dark) var(--dark) #fff;
}

.hscroll svg {
  width: 5px;
  height: 8px;
}

.track {
  flex: 1;
}

.thumb {
  width: 88%;
  height: 14px;
  background: var(--face);
  border: 1px solid;
  border-color: #fff var(--dark) var(--dark) #fff;
}

/* drawing palettes */
.palette {
  display: flex;
  flex-direction: column;
  width: 32px;
  margin-left: 3px;
  padding-top: 36px;
  border-left: 1px solid #fff;
  border-right: 1px solid var(--shade);
}

.pt {
  display: flex;
  align-items: center;
  gap: 7px;
  height: 25px;
  padding-left: 5px;
}

.pt svg {
  width: 20px;
  height: 20px;
}

.hsep {
  height: 5px;
  margin: 0 2px;
  background: linear-gradient(var(--shade), var(--shade)) 0 2px / 100% 1px no-repeat;
}

.palette.draw {
  width: 43px;
  margin-left: 0;
}

.draw-list {
  display: flex;
  flex-direction: column;
  padding-bottom: 4px;
  border-bottom: 1px solid var(--shade);
}

.view {
  flex: 1;
  display: flex;
  margin-left: 1px;
  background: linear-gradient(#5cbcff, #72c5ff 16%, #a2d5fa 50%, #cde6f5 80%, #e4edf2 92%, #f0f0f0);
  border-right: 1px solid #fff;
}

.model {
  width: 100%;
  height: auto;
}

.dim-text {
  font: 13px var(--sans);
  fill: #333;
}

.axis {
  font: 13px var(--sans);
}

.axis.z {
  fill: #1c1ca8;
}

.axis.x {
  fill: #c81414;
}

/* taskbar */
.taskbar {
  display: flex;
  align-items: center;
  gap: 4px;
  height: 25px;
  padding: 2px 0;
  background: var(--face);
  border-top: 1px solid #fff;
}

.start,
.task {
  display: flex;
  align-items: center;
  gap: 2px;
  height: 19px;
  padding: 0 2px;
  border: 1px solid;
  border-color: #fff var(--dark) var(--dark) #fff;
  white-space: nowrap;
}

.start {
  width: 44px;
  font-weight: bold;
}

.start svg,
.task svg,
.quick svg {
  width: 14px;
  height: 14px;
}

.quick {
  display: flex;
  align-items: center;
  gap: 6px;
  padding-left: 2px;
}

.chevron {
  align-self: flex-start;
  font: bold 12px/10px var(--sans);
}

.task {
  width: 134px;
  gap: 3px;
}

.task.active {
  background: #f1efec;
  border-color: var(--dark) #fff #fff var(--dark);
  font-weight: bold;
}

.tray {
  display: flex;
  align-items: center;
  gap: 6px;
  margin-left: auto;
}

.lang {
  width: 10px;
  background: #14286c;
  color: #fff;
  text-align: center;
}

.clock {
  padding: 3px 5px;
  border: 1px solid;
  border-color: var(--shade) #fff #fff var(--shade);
}
```
